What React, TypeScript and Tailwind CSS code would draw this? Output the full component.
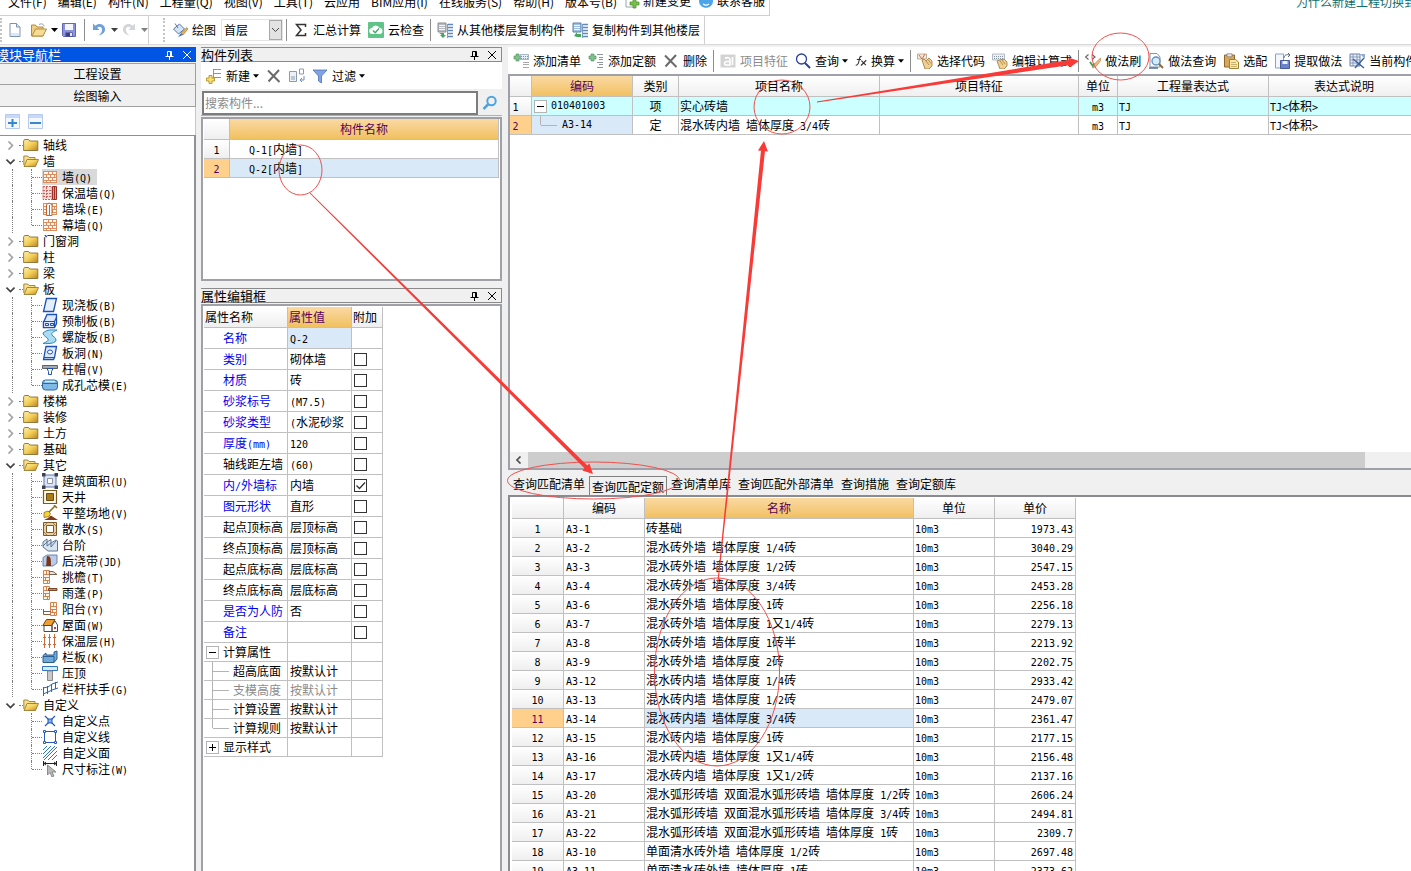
import { Fragment, useState } from 'react';
import type { ReactNode } from 'react';
import { clsx } from 'clsx';

// ---------- shared bits ----------

// Latin runs are half as wide as a Chinese character in the grids
const Txt = ({ children }: { children: string }) => (
  <>
    {children.split(/([\x20-\x7e]+)/).map((part, i) =>
      i % 2 ? (
        <span key={i} className="font-['DejaVu_Sans_Mono',monospace] text-[10px] leading-none whitespace-pre">
          {part}
        </span>
      ) : (
        <Fragment key={i}>{part}</Fragment>
      )
    )}
  </>
);

const Svg = ({ children, className = 'w-4' }: { children: ReactNode; className?: string }) => (
  <svg viewBox="0 0 16 16" fill="none" aria-hidden="true" className={clsx('h-4 shrink-0', className)}>
    {children}
  </svg>
);

const Caret = ({ className = 'w-[7px] text-black' }: { className?: string }) => (
  <svg viewBox="0 0 7 4" aria-hidden="true" className={clsx('h-[4px] shrink-0', className)}>
    <path d="M0 0h7L3.500 4z" fill="currentColor" />
  </svg>
);

const Sep = () => <span className="-mx-px h-[22px] w-px shrink-0 bg-[#8c8c8c]" />;

const Grip = () => <span className="h-6 shrink-0 border-l-2 border-dotted border-[#c4c4c4]" />;

const Plus = () => (
  <path d="M3 1h3v2h2v3H6v2H3V6H1V3h2z" fill="#7fbf8b" stroke="#4d8f5f" strokeWidth=".6" />
);

const Cross = () => (
  <Svg>
    <path d="M2 2.500 13.500 14M13 2 2.500 13.500" stroke="#6b6b6b" strokeWidth="2" />
  </Svg>
);

// ---------- toolbar icons ----------

const icons: Record<string, ReactNode> = {
  file: (
    <Svg>
      <path d="M3 1.500h6.500L13 5v9.500H3z" fill="#fff" stroke="#7b93ad" />
      <path d="M9.500 1.500V5H13" fill="#dce8f4" stroke="#7b93ad" />
      <path d="M4 11h8v3H4z" fill="#dbe7f3" />
    </Svg>
  ),
  open: (
    <Svg>
      <path d="M.5 14V3h4l1.500 2h6v9z" fill="#efcf83" stroke="#b38b3e" />
      <path d="M1 14 4.500 7H15.500L12 14z" fill="#f7dc94" stroke="#b38b3e" />
      <path d="M8 2.500c3-1.500 5 0 5 2" stroke="#8fa3b8" />
    </Svg>
  ),
  save: (
    <Svg>
      <path d="M1.500 1.500h13v13h-12l-1-1z" fill="#8d92dc" stroke="#6267b5" />
      <path d="M4 2h8v6H4z" fill="#f4f6fc" />
      <path d="M4.500 10.500h7v4h-7z" fill="#3b427e" />
      <path d="M9 11h2v3H9z" fill="#e8ebf7" />
    </Svg>
  ),
  undo: (
    <Svg>
      <path d="M2 1.500v6.500h6.500L6.200 5.800C8.500 3.800 11.500 5 11 8.500c-.3 2-1.500 3.500-3.500 5C12 12.500 14.500 10 14 6.500 13.300 2.300 8 .5 4.200 3.800z" fill="#6f9fdd" />
    </Svg>
  ),
  redo: (
    <Svg>
      <path d="M14 1.500v6.500H7.500l2.300-2.200C7.500 3.800 4.500 5 5 8.500c.3 2 1.500 3.500 3.500 5C4 12.500 1.500 10 2 6.500 2.700 2.300 8 .5 11.800 3.800z" fill="#d3d5d8" />
    </Svg>
  ),
  draw: (
    <Svg>
      <path d="m1.500 7 6-5 5 5-6 5z" fill="#d5e3f4" stroke="#5878a4" />
      <path d="M3 1.500 6 6" stroke="#5878a4" />
      <path d="m15 5.500-6 5.500 2 2 5-6z" fill="#e8b04f" stroke="#a37427" strokeWidth=".6" />
      <path d="m9 11-3 4 5-2z" fill="#4377b8" />
    </Svg>
  ),
  check: (
    <Svg>
      <rect width="16" height="16" rx="1" fill="#5fc487" />
      <path d="M4.500 12a3 3 0 0 1-.5-6 4 4 0 0 1 7.500 0 3 3 0 0 1 0 6z" fill="#fff" />
      <path d="m5 8.500 2.200 2.200L11 6.500" stroke="#3fae6d" strokeWidth="1.500" />
    </Svg>
  ),
  copyFrom: (
    <Svg>
      <path d="M1 1h8v9H1z" fill="#b8bcc0" stroke="#8a8f94" />
      <path d="M2 3.500h6M2 5.500h6M2 7.500h6" stroke="#f2f4f6" />
      <path d="M10.500 2v14" stroke="#7c9cc4" />
      <path d="M11 2.500h5M11 5.500h5M11 8.500h5M11 11.500h5M11 14.500h5" stroke="#5f88bd" strokeWidth="1.300" />
      <path d="M2 11h5v2h2l-3 3-3-3h2z" fill="#46a65c" />
    </Svg>
  ),
  copyTo: (
    <Svg>
      <path d="M1 1h8v9H1z" fill="#9fc0e6" stroke="#5e7ea5" />
      <path d="M2 3.500h6M2 5.500h6M2 7.500h6" stroke="#f2f4f6" />
      <path d="M10.500 2v14" stroke="#7c9cc4" />
      <path d="M11 2.500h5M11 5.500h5M11 8.500h5M11 11.500h5M11 14.500h5" stroke="#5f88bd" strokeWidth="1.300" />
      <path d="m2 14 3-4v2h4v3H5z" fill="#46a65c" />
    </Svg>
  ),
  addList: (
    <Svg>
      <Plus />
      <path d="M7.500 1.500h8v5h-8z" fill="#e6eef7" stroke="#8a9cb2" strokeWidth=".7" />
      <path d="M8 3.500h7M8 5.500h7" stroke="#7b93b0" strokeDasharray="1 1" />
      <path d="M10 9.500h6M10 11.500h6M10 14.500h6" stroke="#a8a8a8" />
    </Svg>
  ),
  addQuota: (
    <Svg>
      <Plus />
      <path d="M9 1.500h6M11 4.500h4M11 6.500h4M9 9.500h6M11 11.500h4M9 14.500h6" stroke="#8d959d" />
    </Svg>
  ),
  feature: (
    <Svg>
      <rect x=".5" y="1.500" width="15" height="13" fill="#d3d3d3" />
      <path d="M5 5.500c2-1.500 5-1 5 1V12H6.500C4 12 4 8.500 6.500 8.500H10M12.500 4v8" stroke="#fff" strokeWidth="1.600" />
    </Svg>
  ),
  find: (
    <Svg>
      <circle cx="6.500" cy="6" r="5" stroke="#2b3f9b" strokeWidth="1.300" />
      <path d="m10 10 5 5" stroke="#2b3f9b" strokeWidth="2" />
    </Svg>
  ),
  fx: (
    <Svg className="w-3">
      <path d="M9 2C6.500 1 6 4 5.500 7S4 14 1 13.500M2.500 6H8M8.500 7.500l6 6M15 7l-7 7" stroke="#333" strokeWidth="1.500" />
    </Svg>
  ),
  pick: (
    <Svg>
      <path d="M.5 1h9v5h-9z" fill="#f3e9dc" stroke="#a79276" strokeWidth=".7" />
      <path d="m2 2 3 4 3-5" stroke="#d46a4c" />
      <path d="m5 7 2-1 2 2 3-3 3 3v5l-3 3H8z" fill="#efd093" stroke="#9b7637" strokeWidth=".8" />
      <path d="m9 8 3 4M11 6.500l3 4" stroke="#9b7637" strokeWidth=".7" />
    </Svg>
  ),
  edit: (
    <Svg>
      <path d="M.5 1h12v6H.5z" fill="#eef1f4" stroke="#96a0aa" strokeWidth=".7" />
      <path d="M2 3.500h9M2 5.500h9" stroke="#8793a0" strokeDasharray="1 1" />
      <path d="m5 8 3-1 4-1 3 3v4l-3 3H8z" fill="#efd093" stroke="#9b7637" strokeWidth=".8" />
      <path d="m8 8 3 4M10 7l3 4" stroke="#9b7637" strokeWidth=".7" />
    </Svg>
  ),
  brush: (
    <Svg>
      <path d="m3.500 1.500-3 2.500 3 2.500M7 1.500 10 4 7 6.500" stroke="#666" strokeWidth="1.200" />
      <path d="m5 9 3 4 2-2" stroke="#4d9b57" strokeWidth="2" />
      <path d="m15.500 5-6 6-2 4 4-2 4.500-6z" fill="#f0bb7b" stroke="#b7803e" strokeWidth=".7" />
    </Svg>
  ),
  lookup: (
    <Svg>
      <path d="M2 .5h7L12 4v10H2z" fill="#fff" stroke="#8898aa" />
      <circle cx="8" cy="8" r="4" fill="#d7ebfb" stroke="#5c8fc2" strokeWidth="1.300" />
      <path d="m11 11 4 4" stroke="#8a6a43" strokeWidth="2" />
      <path d="M1 15h9" stroke="#4d6f9a" strokeWidth="1.500" />
    </Svg>
  ),
  paste: (
    <Svg>
      <path d="M1.500 2h10v12h-10z" fill="#d7a85a" stroke="#93692a" />
      <path d="M4 .8h5v3H4z" fill="#e6e6e6" stroke="#7a7a7a" strokeWidth=".7" />
      <path d="M6.500 6.500h6l3 2.500v6.500h-9z" fill="#f7e9ae" stroke="#9b8236" />
      <path d="M8 9.500h5M8 11.500h6M8 13.500h6" stroke="#b39b4f" strokeWidth=".7" />
    </Svg>
  ),
  extract: (
    <Svg>
      <path d="M1.500 1h8v14h-8z" fill="#f4f8fc" stroke="#88a3c2" />
      <path d="M6.500 7.500h9v8h-9z" fill="#6d83c9" stroke="#465aa0" />
      <path d="M8.500 8h5v3h-5z" fill="#eef1fa" />
      <path d="M10 5c0-3 3-4 5-3m-1-2 2 2-2 2" stroke="#5c6b7a" />
    </Svg>
  ),
  current: (
    <Svg>
      <path d="M1 1h10v12H1z" fill="#e8eef6" stroke="#6c83a5" />
      <path d="M1 4h10M1 7h10M1 10h10M4 1v12M8 1v12" stroke="#6c83a5" strokeWidth=".7" />
      <path d="m4 6 11 9M15 5 6 15" stroke="#3b5fa6" strokeWidth="1.400" />
      <path d="M11 1h5v5z" fill="#8faddb" />
    </Svg>
  ),
  create: (
    <Svg>
      <path d="M7 1.500h8M7 5.500h8M7 9.500h8M7.500 1v9" stroke="#7c97b8" />
      <path d="M3 7.500h3v2.500h2.500v3H6v2.500H3V13H.5v-3H3z" fill="#f5dd6f" stroke="#a98b25" strokeWidth=".8" />
    </Svg>
  ),
  duplicate: (
    <Svg>
      <path d="M.5 3.500h7v10h-7z" fill="#eef2f7" stroke="#8c9bb0" />
      <path d="M2 9h4M2 11h4" stroke="#8c9bb0" />
      <path d="M10.500 1h4v5h-4z" fill="#fff" stroke="#8c9bb0" />
      <path d="M15 8v4h-4m2-2-2 2 2 2" stroke="#6d8bd0" />
    </Svg>
  ),
  filter: (
    <Svg>
      <path d="M1 2h14L9.500 8v7l-3-2V8z" fill="#7fa3e4" stroke="#4f73b8" strokeWidth=".8" />
    </Svg>
  ),
  change: (
    <Svg>
      <path d="M2 0h9v14H2z" fill="#fff" stroke="#98a5b3" />
      <path d="M9 6h3v3h3v3h-3v3H9v-3H6V9h3z" fill="#76bf4b" stroke="#4c8b2a" strokeWidth=".7" />
    </Svg>
  ),
  service: (
    <Svg>
      <path d="M1 6h14v2c0 9-14 9-14 0z" fill="#4aa6e8" />
      <path d="M5 11c2 1.500 4 1.500 6 0" stroke="#fff" strokeWidth="1.200" />
    </Svg>
  ),
};

const FolderIcon = ({ open }: { open?: boolean }) => (
  <Svg>
    <defs>
      <linearGradient id="folder" x1="0" y1="0" x2="1" y2="1">
        <stop offset="0" stopColor="#fff0a8" />
        <stop offset=".5" stopColor="#f4cf58" />
        <stop offset="1" stopColor="#b98420" />
      </linearGradient>
    </defs>
    {open ? (
      <>
        <path d="M.8 12V3h4l1.200 1.500h6V7" fill="#f7e08a" stroke="#8f6f25" strokeWidth=".8" />
        <path d="M1 13.500 4 6.500h11.500l-3 7z" fill="url(#folder)" stroke="#8f6f25" strokeWidth=".8" />
      </>
    ) : (
      <path d="M.6 13.500V4l1-1.500h4L6.800 4h8v9.500z" fill="url(#folder)" stroke="#7d6223" strokeWidth=".8" />
    )}
  </Svg>
);

// ---------- tree icons ----------

const bricks = (
  <>
    <path d="M1 2h14v12H1z" fill="#fff6ec" />
    <path d="M1 2.500h14M1 5.500h14M1 8.500h14M1 11.500h14M1 13.500h14M1.500 2v12M14.500 2v12M6.500 2v3M10.500 2v3M4.500 5v3M8.500 5v3M12.500 5v3M6.500 8v3M10.500 8v3M4.500 11v3M8.500 11v3" stroke="#d98e62" />
  </>
);

const brickPost = <path d="M1.500 1.500h6v13h-6zM1.500 5.500h6M1.500 8.500h6M1.500 11.500h6M4.500 2v3M3.500 9v2M5.500 12v2" fill="#fff6ee" stroke="#d5814f" />;

const treeIcons: Record<string, ReactNode> = {
  wall: bricks,
  insulated: (
    <>
      <path d="M1 1.500h9v13H1z" fill="#f7d9d6" stroke="#c2655f" strokeDasharray="2 1" />
      <path d="M1 5.500h8M1 8.500h8M1 11.500h8M4.500 2v12" stroke="#c2655f" strokeDasharray="2 1" />
      <path d="M10.500 1.500h4v13h-4z" fill="#e19b62" stroke="#9c2f26" />
      <path d="M12.500 2v12" stroke="#9c2f26" />
    </>
  ),
  pier: (
    <>
      {bricks}
      <path d="M4.500 3.500 7 2l3 1.500v11H4.500z" fill="#fff" stroke="#c4622f" />
      <path d="M7.500 4v10" stroke="#c4622f" />
    </>
  ),
  slab: <path d="M4.500 1.500h10l-3 13h-10z" fill="#e4effc" stroke="#1e4fb4" strokeWidth="1.300" />,
  precast: (
    <>
      <path d="M5 1.500h9.500v9l-2 4h-11v-5z" fill="#dbe9fb" stroke="#1e4fb4" strokeWidth="1.300" />
      <path d="M1.500 8.500h11v6h-11zM12.500 8.500l2-4" fill="#dbe9fb" stroke="#1e4fb4" strokeWidth="1.200" />
      <path d="M3.500 10.500h3v2h-3zM8.500 10.500h3v2h-3z" stroke="#1e4fb4" />
    </>
  ),
  spiral: (
    <path d="M1 4c5-4 8-3 14-3-4 2-6 3-5 5s4 2 4 5-6 4-13 3.500c3-1.500 6-2.500 5-4.500S1 7 1 4z" fill="#a8dcf2" stroke="#2b87bd" />
  ),
  hole: (
    <>
      <path d="M4 1.500h10.500l-2 11-1 2H1.500z" fill="#dbe9fb" stroke="#1e4fb4" strokeWidth="1.300" />
      <path d="M2 12.500h10" stroke="#1e4fb4" />
      <ellipse cx="8" cy="7" rx="2.500" ry="2" fill="#fff" stroke="#1e4fb4" />
    </>
  ),
  cap: (
    <>
      <path d="M.5 4.500h15v3H.5z" fill="#a5a9ad" stroke="#5d6266" />
      <path d="M5 7.500h6l-1.500 3v3h-3v-3z" fill="#fff" stroke="#1e4fb4" />
    </>
  ),
  core: (
    <>
      <rect x=".5" y="3" width="15" height="10" rx="3" fill="#7fb9e6" stroke="#2f6ba3" />
      <path d="M1 6.500h14" stroke="#2f6ba3" />
      <path d="M3 4.500h10" stroke="#d6ecfb" strokeWidth="1.500" />
    </>
  ),
  area: (
    <>
      <path d="M2 2h12v12H2z" fill="#dbe4f6" stroke="#6577a8" />
      <path d="M5.500 5.500h5v5h-5z" fill="#fff" stroke="#8b90a3" />
      <path d="M0 0h3.500v3.500H0zM12.500 0H16v3.500h-3.500zM0 12.500h3.500V16H0zM12.500 12.500H16V16h-3.500z" fill="#3a4254" />
    </>
  ),
  patio: (
    <>
      <path d="M1.500 1.500h13v13h-13z" fill="#fff8e8" stroke="#7b5c1c" strokeWidth="1.200" />
      <path d="M4.500 4.500h7v7h-7z" fill="#a87c16" stroke="#6a4c0c" />
    </>
  ),
  level: (
    <>
      <path d="m13.500.5-7 7M12 0l3 3" stroke="#8e6d1f" strokeWidth="1.500" />
      <path d="M2 7.500 6 6l2.500 2.500-1.500 3-5 1z" fill="#f6d331" stroke="#8e6d1f" strokeWidth=".8" />
      <path d="m2 15 4-2 3-2.500 3 2 4 2.500z" fill="#803a1d" />
    </>
  ),
  apron: (
    <>
      <path d="M1.500 1.500h13v13h-13z" fill="#e8cfa5" stroke="#7b5a2b" />
      <path d="M4.500 4.500h7v7h-7z" fill="#fff" stroke="#7b5a2b" />
      <path d="m2 5 3-3M11 2l3 3M2 11l3 3M11 14l3-3" stroke="#a17a3f" />
    </>
  ),
  steps: (
    <>
      <path d="M1 5 5 2v3l4-2.500V6l5-3 1.500 1v10H6l-5-4z" fill="#d7e5f2" stroke="#5e7590" />
      <path d="m1 9 4-4v4l4-3v4l5-6" stroke="#5e7590" />
    </>
  ),
  band: (
    <>
      <path d="M1 4.500 5 2h10v8l-4 3H1z" fill="#b9cdea" stroke="#4f6ba0" strokeWidth=".8" />
      <path d="M5 3c4 0 4 3 4 10H4c1-4 0-7 1-10z" fill="#7c3617" />
    </>
  ),
  eave: (
    <>
      {brickPost}
      <path d="M7 2.500h4l4 3H7.500z" fill="#e9e4df" stroke="#79624f" />
    </>
  ),
  canopy: (
    <>
      {brickPost}
      <path d="M6.500 3.500h8.500v2H6.500z" fill="#b99070" stroke="#79482a" />
    </>
  ),
  balcony: (
    <>
      <path d="M8.500 1.500h6v13h-6zM8.500 5.500h6M8.500 8.500h6M8.500 11.500h6M11.500 2v3M10.500 9v2M12.500 12v2" fill="#fff6ee" stroke="#d5814f" />
      <path d="M1.500 8v5.500h7M1.500 10.500h7" stroke="#8d5a3a" />
    </>
  ),
  roof: (
    <>
      <path d="M2 8.500h8v6H2zM10 8l3-4 2.500 4v6.500H10z" fill="#fff" stroke="#4b4b4b" />
      <path d="M4.500 2.500H13L9.500 8.500H.8z" fill="#f0a030" stroke="#70420c" />
      <path d="M12 10h2v2h-2z" fill="#d33" />
    </>
  ),
  layer: <path d="M2.500 1v14M7.500 1v14M12.500 1v14M1 4.500h3M6 4.500h3M11 4.500h3M1 11.500h3M6 11.500h3M11 11.500h3" stroke="#cc6a3e" />,
  panel: (
    <>
      <path d="M1 6.500 4 4v2h8V3l3-1v8l-3 3.500H1z" fill="#6fa9da" stroke="#2a5f93" />
      <path d="M1 7.500h11v6" stroke="#2a5f93" />
    </>
  ),
  coping: (
    <>
      <path d="M.5 1.500h15v4H.5z" fill="#d7ebfb" stroke="#2c76c0" />
      <path d="M5.500 6h5v9.500h-5z" fill="#c9c9c9" stroke="#8a8a8a" />
    </>
  ),
  rail: <path d="M1.500 6v9M5.500 5v8M9.500 3v8M13.500 1v7M1 7l5-1 4-3 6-2M1 13l5-2 4-2 6-2" stroke="#2c66b5" />,
  point: (
    <>
      <path d="m3 3 10 10M13 3 3 13" stroke="#2759b8" strokeWidth="1.200" />
      <path d="M6 6h4v4H6z" fill="#7fb0ee" stroke="#2759b8" />
    </>
  ),
  line: (
    <>
      <path d="M2.500 2.500h11v11h-11z" stroke="#2759b8" />
      <path d="M1.500 1.500h2v2h-2zM12.500 1.500h2v2h-2zM1.500 12.500h2v2h-2zM12.500 12.500h2v2h-2z" fill="#fff" stroke="#2759b8" />
    </>
  ),
  face: <path d="m1 5 4-4M1 9l8-8M1 13 13 1M2 15 15 2M6 15l9-9M10 15l5-5" stroke="#2f76c8" />,
  dimension: (
    <>
      <path d="M1.500 0v5M14.500 0v5M2 2.500h12M4 1 2 2.500 4 4M12 1l2 1.500L12 4" stroke="#222" />
      <path d="M5.500 4v10l2.500-2.500L10 16l2-1-2-4h4z" fill="#b9b9b9" stroke="#777" strokeWidth=".8" />
    </>
  ),
};

// ---------- data ----------

type TreeItem = { label: string; icon: string };
type TreeGroup = { label: string; items?: TreeItem[] };

const tree: TreeGroup[] = [
  { label: '轴线' },
  {
    label: '墙',
    items: [
      { label: '墙(Q)', icon: 'wall' },
      { label: '保温墙(Q)', icon: 'insulated' },
      { label: '墙垛(E)', icon: 'pier' },
      { label: '幕墙(Q)', icon: 'wall' },
    ],
  },
  { label: '门窗洞' },
  { label: '柱' },
  { label: '梁' },
  {
    label: '板',
    items: [
      { label: '现浇板(B)', icon: 'slab' },
      { label: '预制板(B)', icon: 'precast' },
      { label: '螺旋板(B)', icon: 'spiral' },
      { label: '板洞(N)', icon: 'hole' },
      { label: '柱帽(V)', icon: 'cap' },
      { label: '成孔芯模(E)', icon: 'core' },
    ],
  },
  { label: '楼梯' },
  { label: '装修' },
  { label: '土方' },
  { label: '基础' },
  {
    label: '其它',
    items: [
      { label: '建筑面积(U)', icon: 'area' },
      { label: '天井', icon: 'patio' },
      { label: '平整场地(V)', icon: 'level' },
      { label: '散水(S)', icon: 'apron' },
      { label: '台阶', icon: 'steps' },
      { label: '后浇带(JD)', icon: 'band' },
      { label: '挑檐(T)', icon: 'eave' },
      { label: '雨蓬(P)', icon: 'canopy' },
      { label: '阳台(Y)', icon: 'balcony' },
      { label: '屋面(W)', icon: 'roof' },
      { label: '保温层(H)', icon: 'layer' },
      { label: '栏板(K)', icon: 'panel' },
      { label: '压顶', icon: 'coping' },
      { label: '栏杆扶手(G)', icon: 'rail' },
    ],
  },
  {
    label: '自定义',
    items: [
      { label: '自定义点', icon: 'point' },
      { label: '自定义线', icon: 'line' },
      { label: '自定义面', icon: 'face' },
      { label: '尺寸标注(W)', icon: 'dimension' },
    ],
  },
];

const menus = [
  '文件(F)', '编辑(E)', '构件(N)', '工程量(Q)', '视图(V)', '工具(T)', '云应用',
  'BIM应用(I)', '在线服务(S)', '帮助(H)', '版本号(B)',
];

type Prop = { name: string; value: string; blue?: boolean; box?: boolean; checked?: boolean };

const props: Prop[] = [
  { name: '名称', value: 'Q-2', blue: true },
  { name: '类别', value: '砌体墙', blue: true, box: true },
  { name: '材质', value: '砖', blue: true, box: true },
  { name: '砂浆标号', value: '(M7.5)', blue: true, box: true },
  { name: '砂浆类型', value: '(水泥砂浆', blue: true, box: true },
  { name: '厚度(mm)', value: '120', blue: true, box: true },
  { name: '轴线距左墙', value: '(60)', box: true },
  { name: '内/外墙标', value: '内墙', blue: true, box: true, checked: true },
  { name: '图元形状', value: '直形', blue: true, box: true },
  { name: '起点顶标高', value: '层顶标高', box: true },
  { name: '终点顶标高', value: '层顶标高', box: true },
  { name: '起点底标高', value: '层底标高', box: true },
  { name: '终点底标高', value: '层底标高', box: true },
  { name: '是否为人防', value: '否', blue: true, box: true },
  { name: '备注', value: '', blue: true, box: true },
];

const calcProps = ['超高底面', '支模高度', '计算设置', '计算规则'];

const quotas: [string, string, string][] = [
  ['A3-1', '砖基础', '1973.43'],
  ['A3-2', '混水砖外墙 墙体厚度 1/4砖', '3040.29'],
  ['A3-3', '混水砖外墙 墙体厚度 1/2砖', '2547.15'],
  ['A3-4', '混水砖外墙 墙体厚度 3/4砖', '2453.28'],
  ['A3-6', '混水砖外墙 墙体厚度 1砖', '2256.18'],
  ['A3-7', '混水砖外墙 墙体厚度 1又1/4砖', '2279.13'],
  ['A3-8', '混水砖外墙 墙体厚度 1砖半', '2213.92'],
  ['A3-9', '混水砖外墙 墙体厚度 2砖', '2202.75'],
  ['A3-12', '混水砖内墙 墙体厚度 1/4砖', '2933.42'],
  ['A3-13', '混水砖内墙 墙体厚度 1/2砖', '2479.07'],
  ['A3-14', '混水砖内墙 墙体厚度 3/4砖', '2361.47'],
  ['A3-15', '混水砖内墙 墙体厚度 1砖', '2177.15'],
  ['A3-16', '混水砖内墙 墙体厚度 1又1/4砖', '2156.48'],
  ['A3-17', '混水砖内墙 墙体厚度 1又1/2砖', '2137.16'],
  ['A3-20', '混水弧形砖墙 双面混水弧形砖墙 墙体厚度 1/2砖', '2606.24'],
  ['A3-21', '混水弧形砖墙 双面混水弧形砖墙 墙体厚度 3/4砖', '2494.81'],
  ['A3-22', '混水弧形砖墙 双面混水弧形砖墙 墙体厚度 1砖', '2309.7'],
  ['A3-10', '单面清水砖外墙 墙体厚度 1/2砖', '2697.48'],
  ['A3-11', '单面清水砖外墙 墙体厚度 1砖', '2373.62'],
];

const tabs = ['查询匹配清单', '查询匹配定额', '查询清单库', '查询匹配外部清单', '查询措施', '查询定额库'];

// ---------- grid styles ----------

const cellBase = 'border-r border-b border-[#c0c0c0] p-0 leading-[18px] whitespace-nowrap';
const cell = `h-[19px] ${cellBase}`;
const tallCell = `h-[21px] ${cellBase}`;
const head = 'h-[21px] border-r border-b border-[#c0c0c0] bg-linear-to-b from-white to-[#efefef] p-0 font-normal leading-5 whitespace-nowrap';
const headHot = 'h-[21px] border-r border-b border-[#c0c0c0] bg-linear-to-b from-[#fad9a2] to-[#f1c15f] p-0 font-normal leading-5 whitespace-nowrap text-[#5a0058]';
const rowNo = 'bg-linear-to-b from-white to-[#efefef] text-center';
const rowNoHot = 'bg-[#ffd08b] text-center text-[#5a0058]';
const table = 'table-fixed border-separate border-spacing-0';

const Expander = ({ open, label }: { open: boolean; label: string }) => (
  <button aria-label={label} className="flex size-[13px] shrink-0 items-center justify-center border border-[#b4b4b4] bg-white">
    <svg viewBox="0 0 7 7" className="size-[7px]">
      <path d={open ? 'M0 3.500h7' : 'M0 3.500h7M3.500 0v7'} stroke="#000" />
    </svg>
  </button>
);

// ---------- panels ----------

const PanelTitle = ({ title, active }: { title: string; active?: boolean }) => (
  <div
    className={clsx(
      'flex h-[15px] shrink-0 items-center justify-between pr-1 text-[13px] leading-[15px]',
      active ? 'bg-[#0055e5] text-white' : 'border border-l-0 border-[#8a8a8a] bg-[#f0f0f0] text-black'
    )}
  >
    <span className={clsx('whitespace-nowrap', active && '-ml-1')}>{title}</span>
    <span className="flex gap-2">
      <button aria-label={`固定${title}`}>
        <svg viewBox="0 0 10 10" fill="none" className="size-[10px]">
          <path d="M3.500 1.500h4v5h-4zM1.500 6.500h8M5.500 7v3M6.500 1v5" stroke="currentColor" />
        </svg>
      </button>
      <button aria-label={`关闭${title}`}>
        <svg viewBox="0 0 10 10" fill="none" className="size-[10px]">
          <path d="m1 1 8 8M9 1 1 9" stroke="currentColor" />
        </svg>
      </button>
    </span>
  </div>
);

const ToolButton = ({ icon, label, caret, muted }: { icon: ReactNode; label: string; caret?: boolean; muted?: boolean }) => (
  <button className={clsx('flex shrink-0 items-center gap-[3px] whitespace-nowrap', muted && 'text-[#8b8b8b]')}>
    <span className="mr-px">{icon}</span>
    {label}
    {caret && <Caret className="w-[6px]" />}
  </button>
);

const TreeView = () => {
  const [selected, setSelected] = useState('1-0');

  return (
    <ul className="min-h-0 flex-1 overflow-hidden border-t border-r-2 border-[#8d9097] bg-white pt-px">
      {tree.map((group, g) => (
        <li key={group.label}>
          <button className="flex h-4 items-center">
            <span className="flex w-[19px] justify-end pr-1">
              <svg viewBox="0 0 9 9" fill="none" className="size-[9px]">
                {group.items ? (
                  <path d="m.5 2.500 4 4 4-4" stroke="#404040" strokeWidth="1.600" />
                ) : (
                  <path d="m2.500.5 4 4-4 4" stroke="#a0a0a0" strokeWidth="1.600" />
                )}
              </svg>
            </span>
            <span className="w-1 border-t border-dotted border-[#808080]" />
            <FolderIcon open={!!group.items} />
            <span className="pl-1">{group.label}</span>
          </button>
          {group.items && (
            <ul>
              {group.items.map((item, i) => {
                const key = `${g}-${i}`;
                const last = i === group.items!.length - 1;
                return (
                  <li key={item.label} className="flex h-4 items-center">
                    <span
                      className={clsx(
                        'ml-3 h-4 w-[19px]',
                        g < tree.length - 1 && 'border-l border-dotted border-[#808080]'
                      )}
                    />
                    <span className={clsx('w-0 self-start border-l border-dotted border-[#808080]', last ? 'h-2' : 'h-4')} />
                    <span className="w-[10px] border-t border-dotted border-[#808080]" />
                    <button
                      onClick={() => setSelected(key)}
                      className={clsx('flex h-4 items-center gap-1 pr-[5px] leading-4', selected === key && 'bg-[#d9d9d9]')}
                    >
                      <Svg>{treeIcons[item.icon]}</Svg>
                      <span>
                        <Txt>{item.label}</Txt>
                      </span>
                    </button>
                  </li>
                );
              })}
            </ul>
          )}
        </li>
      ))}
    </ul>
  );
};

const NavPanel = () => (
  <aside className="flex w-[196px] shrink-0 flex-col">
    <PanelTitle title="模块导航栏" active />
    <button className="mt-px h-[22px] shrink-0 border border-l-0 border-[#a0a0a0] bg-[#f0f0f0]">工程设置</button>
    <button className="h-[22px] shrink-0 border border-t-0 border-l-0 border-[#a0a0a0] bg-[#f0f0f0]">绘图输入</button>
    <div className="flex h-[28px] shrink-0 items-center gap-2 border-r border-[#c8c8c8] bg-white pl-[5px]">
      {['全部展开', '全部折叠'].map((label, i) => (
        <button key={label} aria-label={label}>
          <svg viewBox="0 0 15 15" fill="none" className="size-[15px]">
            <path d="M.5.5h14v14H.5z" fill="#f3f8ff" stroke="#b7c9ee" />
            <path d="M1 1h13v3H1z" fill="#c9d8f6" />
            <path d={i ? 'M2 9h11' : 'M3 9h9M7.500 5v8'} stroke="#3a87c8" strokeWidth="2" />
          </svg>
        </button>
      ))}
    </div>
    <TreeView />
  </aside>
);

const ComponentPanel = () => (
  <>
    <PanelTitle title="构件列表" />
    <div className="flex h-[27px] shrink-0 items-center gap-[7px] bg-white pl-[5px]">
      <ToolButton icon={icons.create} label="新建" caret />
      <button aria-label="删除构件">
        <Cross />
      </button>
      <button aria-label="复制构件">{icons.duplicate}</button>
      <ToolButton icon={icons.filter} label="过滤" caret />
    </div>
    <div className="mt-px flex h-[26px] shrink-0 items-center border-b border-[#b0b0b0]">
      <input
        aria-label="搜索构件"
        placeholder="搜索构件..."
        className="ml-px h-6 w-0 flex-1 border-2 border-[#7d7d7d] bg-white pl-px outline-none placeholder:text-[#8a8a8a]"
      />
      <button aria-label="搜索" className="flex w-6 justify-center">
        <Svg>
          <circle cx="9.500" cy="6" r="4.200" stroke="#4da3e2" strokeWidth="2" />
          <path d="m6.500 9-5 5" stroke="#4da3e2" strokeWidth="2.500" />
        </Svg>
      </button>
    </div>
    <div className="mt-px h-[164px] shrink-0 border-2 border-[#a0a0a8] bg-white pl-px">
      <table className={clsx(table, 'w-[295px]')}>
        <colgroup>
          <col className="w-[26px]" />
          <col />
        </colgroup>
        <thead>
          <tr>
            <th className={head} />
            <th className={headHot}>构件名称</th>
          </tr>
        </thead>
        <tbody>
          <tr>
            <td className={clsx(cell, rowNo)}><Txt>1</Txt></td>
            <td className={clsx(cell, 'pl-[19px]')}><Txt>Q-1[内墙]</Txt></td>
          </tr>
          <tr>
            <td className={clsx(cell, rowNoHot)}><Txt>2</Txt></td>
            <td className={clsx(cell, 'bg-[#d9e9f7] pl-[19px]')}><Txt>Q-2[内墙]</Txt></td>
          </tr>
        </tbody>
      </table>
    </div>
  </>
);

const PropertyPanel = () => (
  <>
    <div className="mt-[7px] flex shrink-0 flex-col">
      <PanelTitle title="属性编辑框" />
    </div>
    <div className="mt-px min-h-0 flex-1 overflow-hidden border-t-2 border-r-2 border-l-2 border-[#a0a0a8] bg-white pt-px pl-px">
      <table className={clsx(table, 'w-[179px]')}>
        <colgroup>
          <col className="w-[84px]" />
          <col className="w-[64px]" />
          <col />
        </colgroup>
        <thead>
          <tr>
            <th className={clsx(head, 'pl-px text-left')}>属性名称</th>
            <th className={clsx(headHot, 'pl-px text-left')}>属性值</th>
            <th className={clsx(head, 'pl-px text-left')}>附加</th>
          </tr>
        </thead>
        <tbody>
          {props.map((p, i) => (
            <tr key={p.name}>
              <td className={clsx(tallCell, 'pl-[19px]', p.blue ? 'text-[#0000f0]' : 'text-black')}>
                <Txt>{p.name}</Txt>
              </td>
              <td className={clsx(tallCell, 'pl-[2px]', i === 0 && 'bg-[#d9e9f7]')}>
                <Txt>{p.value}</Txt>
              </td>
              <td className={tallCell}>
                {p.box && (
                  <span className="relative ml-[2px] block size-[13px]">
                    <input
                      type="checkbox"
                      aria-label={`附加 ${p.name}`}
                      defaultChecked={p.checked}
                      className="peer block size-[13px] appearance-none border border-[#333] bg-white"
                    />
                    <svg viewBox="0 0 13 13" fill="none" className="pointer-events-none absolute inset-0 hidden size-[13px] peer-checked:block">
                      <path d="m2.500 6.500 3 3 5.500-6" stroke="#333" strokeWidth="1.300" />
                    </svg>
                  </span>
                )}
              </td>
            </tr>
          ))}
          <tr>
            <td className={cell}>
              <span className="flex items-center gap-1 pl-[2px]">
                <Expander open label="折叠计算属性" />
                计算属性
              </span>
            </td>
            <td className={cell} />
            <td className={cell} />
          </tr>
          {calcProps.map((name, i) => (
            <tr key={name} className={i === 1 ? 'text-[#8b8b8b]' : 'text-black'}>
              <td className={cell}>
                <span className="flex h-[18px] items-center pl-2">
                  <span
                    className={clsx('self-start border-l border-[#b4b4b4]', i === calcProps.length - 1 ? 'h-[9px]' : 'h-[18px]')}
                  />
                  <span className="mr-1 w-4 border-t border-[#b4b4b4]" />
                  {name}
                </span>
              </td>
              <td className={clsx(cell, 'pl-[2px]')}>按默认计</td>
              <td className={cell} />
            </tr>
          ))}
          <tr>
            <td className={cell}>
              <span className="flex items-center gap-1 pl-[2px]">
                <Expander open={false} label="展开显示样式" />
                显示样式
              </span>
            </td>
            <td className={cell} />
            <td className={cell} />
          </tr>
        </tbody>
      </table>
    </div>
  </>
);

const BillGrid = () => (
  <div className="flex h-[396px] shrink-0 flex-col overflow-hidden border-t-2 border-b-2 border-l-2 border-[#a0a0a8] bg-white">
    <div className="min-h-0 flex-1">
      <table className={clsx(table, 'w-full min-w-[910px]')}>
        <colgroup>
          <col className="w-[22px]" />
          <col className="w-[101px]" />
          <col className="w-[46px]" />
          <col className="w-[201px]" />
          <col className="w-[199px]" />
          <col className="w-[39px]" />
          <col className="w-[151px]" />
          <col />
        </colgroup>
        <thead>
          <tr>
            <th className={head} />
            <th className={headHot}>编码</th>
            {['类别', '项目名称', '项目特征', '单位', '工程量表达式', '表达式说明'].map((h) => (
              <th key={h} className={head}>{h}</th>
            ))}
          </tr>
        </thead>
        <tbody>
          <tr className="bg-[#ccffff]">
            <td className={clsx(cell, rowNo, 'pr-[10px]')}><Txt>1</Txt></td>
            <td className={cell}>
              <span className="flex items-center gap-1 pl-[2px]">
                <Expander open label="折叠清单" />
                <Txt>010401003</Txt>
              </span>
            </td>
            <td className={clsx(cell, 'text-center')}>项</td>
            <td className={clsx(cell, 'pl-px')}>实心砖墙</td>
            <td className={cell} />
            <td className={clsx(cell, 'text-center')}><Txt>m3</Txt></td>
            <td className={clsx(cell, 'pl-px')}><Txt>TJ</Txt></td>
            <td className={clsx(cell, 'pl-px')}><Txt>{'TJ<体积>'}</Txt></td>
          </tr>
          <tr>
            <td className={clsx(cell, rowNoHot, 'pr-[10px]')}><Txt>2</Txt></td>
            <td className={clsx(cell, 'bg-[#d9e9f7]')}>
              <span className="flex h-[18px] items-center pl-2">
                <span className="h-[9px] self-start border-l border-[#b4b4b4]" />
                <span className="mr-[5px] w-4 border-t border-[#b4b4b4]" />
                <Txt>A3-14</Txt>
              </span>
            </td>
            <td className={clsx(cell, 'text-center')}>定</td>
            <td className={clsx(cell, 'pl-px')}><Txt>混水砖内墙 墙体厚度 3/4砖</Txt></td>
            <td className={cell} />
            <td className={clsx(cell, 'text-center')}><Txt>m3</Txt></td>
            <td className={clsx(cell, 'pl-px')}><Txt>TJ</Txt></td>
            <td className={clsx(cell, 'pl-px')}><Txt>{'TJ<体积>'}</Txt></td>
          </tr>
        </tbody>
      </table>
    </div>
    <div className="flex h-4 shrink-0 bg-[#f0f0f0]">
      <button aria-label="向左滚动" className="flex w-[18px] items-center justify-center">
        <svg viewBox="0 0 8 8" fill="none" className="size-2">
          <path d="M5.500.5 2 4l3.500 3.500" stroke="#505050" strokeWidth="1.700" />
        </svg>
      </button>
      <div className="mr-[46px] flex-1 bg-[#cdcdcd]" />
    </div>
  </div>
);

const QuotaGrid = () => (
  <div className="min-h-0 flex-1 overflow-hidden border-t-2 border-l-2 border-[#8a8a90] bg-white pt-px pl-[2px]">
    <table className={clsx(table, 'w-[564px]')}>
      <colgroup>
        <col className="w-[52px]" />
        <col className="w-[81px]" />
        <col className="w-[269px]" />
        <col className="w-[81px]" />
        <col />
      </colgroup>
      <thead>
        <tr>
          <th className={head} />
          <th className={head}>编码</th>
          <th className={headHot}>名称</th>
          <th className={head}>单位</th>
          <th className={head}>单价</th>
        </tr>
      </thead>
      <tbody>
        {quotas.map(([code, name, price], i) => (
          <tr key={code}>
            <td className={clsx(cell, i === 10 ? rowNoHot : rowNo)}><Txt>{String(i + 1)}</Txt></td>
            <td className={clsx(cell, 'pl-[2px]')}><Txt>{code}</Txt></td>
            <td className={clsx(cell, 'pl-px', i === 10 && 'bg-[#d9e9f7]')}><Txt>{name}</Txt></td>
            <td className={clsx(cell, 'pl-px')}><Txt>10m3</Txt></td>
            <td className={clsx(cell, 'pr-[2px] text-right')}><Txt>{price}</Txt></td>
          </tr>
        ))}
      </tbody>
    </table>
  </div>
);

const WorkArea = () => {
  const [tab, setTab] = useState(1);

  return (
    <main className="flex min-w-0 flex-1 flex-col overflow-hidden">
      <div className="flex h-[27px] shrink-0 items-center gap-[7px] bg-white pl-[5px]">
        <ToolButton icon={icons.addList} label="添加清单" />
        <ToolButton icon={icons.addQuota} label="添加定额" />
        <ToolButton icon={<Cross />} label="删除" />
        <Sep />
        <ToolButton icon={icons.feature} label="项目特征" muted />
        <ToolButton icon={icons.find} label="查询" caret />
        <ToolButton icon={icons.fx} label="换算" caret />
        <Sep />
        <ToolButton icon={icons.pick} label="选择代码" />
        <ToolButton icon={icons.edit} label="编辑计算式" />
        <Sep />
        <ToolButton icon={icons.brush} label="做法刷" />
        <ToolButton icon={icons.lookup} label="做法查询" />
        <ToolButton icon={icons.paste} label="选配" />
        <ToolButton icon={icons.extract} label="提取做法" />
        <ToolButton icon={icons.current} label="当前构件" />
      </div>
      <BillGrid />
      <div role="tablist" className="flex h-[25px] shrink-0 items-end gap-px bg-[#f0f0f0] pl-[2px]">
        {tabs.map((label, i) => (
          <button
            key={label}
            role="tab"
            aria-selected={tab === i}
            onClick={() => setTab(i)}
            className={clsx(
              'shrink-0 whitespace-nowrap',
              tab === i ? 'h-[19px] border border-b-0 border-[#808080] px-[2px] pt-[2px]' : 'h-[22px] px-[3px]'
            )}
          >
            {label}
          </button>
        ))}
      </div>
      <QuotaGrid />
    </main>
  );
};

const TopBars = () => (
  <header className="shrink-0 bg-white">
    <nav className="flex h-4 items-end overflow-hidden">
      <div className="flex h-4 shrink-0 items-end gap-[11px] border-r border-b border-[#d0d0d0] pr-1 pb-[6px] pl-2 leading-[14px]">
        {menus.map((m) => (
          <button key={m} className="whitespace-nowrap">{m}</button>
        ))}
        <button className="-ml-1 flex items-center gap-[3px] whitespace-nowrap">
          {icons.change}新建变更
        </button>
        <button className="-ml-1 flex items-center gap-[3px] whitespace-nowrap">
          {icons.service}联系客服
        </button>
      </div>
      <a href="#help" className="ml-auto w-[115px] overflow-hidden pb-[7px] leading-[14px] whitespace-nowrap text-[#0f6e6e]">
        为什么新建工程切换到
      </a>
    </nav>
    <div className="flex h-[29px] border-b border-[#d8d8d8]">
      <div className="flex items-center border-r border-[#d0d0d0]">
        <Grip />
        <button aria-label="新建" className="ml-[5px]">{icons.file}</button>
        <button aria-label="打开" className="ml-2 flex items-center gap-1">{icons.open}<Caret /></button>
        <button aria-label="保存" className="mr-2 ml-[3px]">{icons.save}</button>
        <Sep />
        <button aria-label="撤销" className="ml-[7px] flex items-center gap-1">{icons.undo}<Caret className="w-[7px] text-[#404040]" /></button>
        <button aria-label="重做" className="ml-[3px] flex items-center gap-1">{icons.redo}<Caret className="w-[7px] text-[#808080]" /></button>
      </div>
      <div className="flex items-center gap-[7px] border-r border-[#d0d0d0] pr-1 pl-[14px]">
        <Grip />
        <ToolButton icon={icons.draw} label="绘图" />
        <div className="relative -mr-[3px] -ml-[2px] flex h-[22px] w-[62px] border border-[#e4e4e4]">
          <select aria-label="楼层" className="w-full appearance-none bg-white pl-[2px] outline-none">
            <option>首层</option>
          </select>
          <span className="pointer-events-none absolute top-0 right-0 flex h-5 w-[13px] items-center justify-center border border-[#a8a8a8] bg-[#e3e3e3]">
            <svg viewBox="0 0 9 6" fill="none" className="h-[6px] w-[9px]">
              <path d="m1 1 3.500 3.500L8 1" stroke="#444" />
            </svg>
          </span>
        </div>
        <Sep />
        <ToolButton
          icon={
            <Svg>
              <path d="M12.500 5V2.500h-9L8 8l-4.500 5.500h9V11" stroke="#333" strokeWidth="1.500" />
            </Svg>
          }
          label="汇总计算"
        />
        <ToolButton icon={icons.check} label="云检查" />
        <Sep />
        <ToolButton icon={icons.copyFrom} label="从其他楼层复制构件" />
        <ToolButton icon={icons.copyTo} label="复制构件到其他楼层" />
      </div>
    </div>
  </header>
);

// ---------- red mark-up drawn over the window ----------

type ArrowProps = { from: [number, number]; to: [number, number]; width: number };

const Arrow = ({ from, to, width }: ArrowProps) => {
  const [x1, y1] = from;
  const [x2, y2] = to;
  const len = Math.hypot(x2 - x1, y2 - y1);
  const ux = (x2 - x1) / len;
  const uy = (y2 - y1) / len;
  const at = (along: number, off: number) => `${x1 + ux * along - uy * off},${y1 + uy * along + ux * off}`;
  const neck = len - 10;
  const half = width / 2;
  return (
    <polygon
      fill="#f93a37"
      points={[at(0, -0.5), at(neck, -half), at(neck, -5), at(len, 0), at(neck, 5), at(neck, half), at(0, 0.5)].join(' ')}
    />
  );
};

const Markup = () => (
  <svg viewBox="0 0 1411 871" fill="none" aria-hidden="true" className="pointer-events-none absolute top-0 left-0 h-[871px] w-[1411px] max-w-none">
    <g stroke="#f0504e">
      <ellipse cx="300.500" cy="170" rx="21.500" ry="25" />
      <ellipse cx="593.500" cy="480.500" rx="86" ry="18.500" />
      <ellipse cx="717" cy="672" rx="62.500" ry="94" />
      <ellipse cx="782" cy="107" rx="28" ry="27" />
      <ellipse cx="1120.500" cy="56.500" rx="28.500" ry="23.500" />
    </g>
    <Arrow from={[310, 193]} to={[593, 474]} width={4} />
    <Arrow from={[717, 591]} to={[764, 141]} width={4} />
    <Arrow from={[817, 102]} to={[1079, 61]} width={5} />
  </svg>
);

export default function App() {
  return (
    <div className="relative flex h-screen flex-col overflow-hidden bg-[#f0f0f0] font-['Noto_Sans_CJK_SC',sans-serif] text-xs text-black">
      <TopBars />
      <div className="flex min-h-0 flex-1 pt-[2px]">
        <NavPanel />
        <section className="mr-[6px] ml-[5px] flex w-[301px] shrink-0 flex-col">
          <ComponentPanel />
          <PropertyPanel />
        </section>
        <WorkArea />
      </div>
      <Markup />
    </div>
  );
}
